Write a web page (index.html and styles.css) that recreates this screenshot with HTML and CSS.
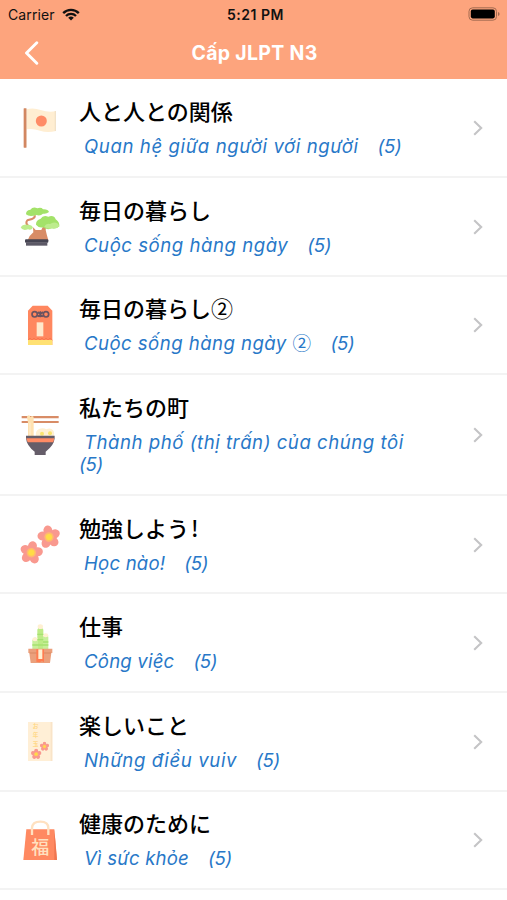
FILE: index.html
```html
<!DOCTYPE html>
<html lang="vi">
<head>
  <meta charset="UTF-8" />
  <meta name="viewport" content="width=device-width, initial-scale=1.0" />
  <title>Cấp JLPT N3</title>
  <link rel="stylesheet" href="styles.css">
</head>
<body>
  <svg width="0" height="0" class="defs">
    <symbol id="chevron" viewBox="0 0 10 16"><path d="M1.2 1.2L8.2 8L1.2 14.8" fill="none" stroke="#c4c4c6" stroke-width="2.1"/></symbol>
    <symbol id="blossom" viewBox="-24 -24 48 48">
      <g fill="#f9998f">
        <ellipse cy="-12" rx="8.5" ry="10"/>
        <ellipse cy="-12" rx="8.5" ry="10" transform="rotate(72)"/>
        <ellipse cy="-12" rx="8.5" ry="10" transform="rotate(144)"/>
        <ellipse cy="-12" rx="8.5" ry="10" transform="rotate(216)"/>
        <ellipse cy="-12" rx="8.5" ry="10" transform="rotate(288)"/>
      </g>
      <circle r="9" fill="#ffb870"/><circle r="6" fill="#ffdc45"/>
    </symbol>
  </svg>

  <header class="header">
    <div class="status">
      <div class="carrier">
        <span>Carrier</span>
        <svg width="18" height="13" viewBox="0 0 18 13" fill="none" stroke="#111" stroke-width="2.3">
          <path d="M1.2 5.1a11 11 0 0 1 15.6 0"/><path d="M4 8a7 7 0 0 1 10 0"/>
          <path d="M9 12.5L6.2 9.8a4 4 0 0 1 5.6 0z" fill="#111" stroke="none"/>
        </svg>
      </div>
      <span class="time">5:21 PM</span>
      <svg class="battery" width="33" height="14" viewBox="0 0 33 14">
        <rect x="1" y=".8" width="27.5" height="12.4" rx="3.6" fill="none" stroke="#a36b50"/>
        <rect x="2.8" y="2.6" width="24" height="8.8" rx="1.8" fill="#000"/>
        <path d="M30 5v4q1.6-.5 1.6-2T30 5z" fill="#a36b50"/>
      </svg>
    </div>
    <div class="navbar">
      <svg class="back" width="15" height="24" viewBox="0 0 15 24"><path d="M12.8 1.8L2.5 12L12.8 22.2" fill="none" stroke="#fff" stroke-width="2.9" stroke-linecap="round" stroke-linejoin="round"/></svg>
      <h1>Cấp JLPT N3</h1>
    </div>
  </header>

  <main class="list">
    <div class="row">
      <svg class="icon" viewBox="30 40 120 120">
        <path d="M50 44Q70 38 92 46T138 50V109Q112 116 90 108T50 104z" fill="#ffeed2"/>
        <path d="M134 49h4v60h-4z" fill="#f2e2c8"/>
        <circle cx="94" cy="79" r="16.500" fill="#ff8c66"/>
        <rect x="41" y="41" width="8.500" height="118" rx="1" fill="#d28761"/>
      </svg>
      <div class="text">
        <h2>人と人との関係</h2>
        <p><span class="name n1">Quan hệ giữa người với người</span>    <span class="count">(5)</span></p>
      </div>
      <svg class="arrow"><use href="#chevron"/></svg>
    </div>

    <div class="row">
      <svg class="icon" viewBox="30 42 120 120">
        <path d="M74 70q2 8-8 11t-14 4q-7 8 3 17" fill="none" stroke="#d88c66" stroke-width="6"/>
        <path d="M69 106q5 5 8 8h17l7-15 7 3q-3 13 2 25l5 18H53q4-14 17-24z" fill="#d88c66"/>
        <path d="M48 67Q47 55 61 53Q69 43 82 49Q94 45 99 52Q114 51 117 60Q109 67 99 65Q91 73 79 69Q58 76 48 67z" fill="#a3e269"/>
        <path d="M78 98Q77 84 92 80Q99 68 115 74Q132 68 137 82Q149 90 148 103Q139 112 126 109Q111 115 99 106Q87 109 78 98z" fill="#a3e269"/>
        <path d="M103 104q5-11 17-8q11-9 24-1l4 8q-9 9-22 6q-12 4-23-5z" fill="#bdec8d"/>
        <path d="M32 106q6-10 19-8q15-1 18 9q-5 9-15 5q-17 6-22-6z" fill="#bdec8d"/>
        <rect x="45" y="142" width="70" height="10" rx="3" fill="#454452"/>
        <path d="M48 151h64v10h-64z" fill="#5c5966"/>
      </svg>
      <div class="text">
        <h2>毎日の暮らし</h2>
        <p><span class="name n2">Cuộc sống hàng ngày</span>    <span class="count">(5)</span></p>
      </div>
      <svg class="arrow"><use href="#chevron"/></svg>
    </div>

    <div class="row">
      <svg class="icon" viewBox="30 45 120 120">
        <path d="M54 62L68 47h45l14 15v103H54z" fill="#ff875f"/>
        <path d="M54 150h73v15H54z" fill="#ffe173"/>
        <path d="M54 150l6-6 6 6 6-6 6 6 6-6 6 6 6-6 6 6 6-6 6 6 6-6 7 6" fill="none" stroke="#f8794d" stroke-width="3"/>
        <rect x="80" y="97" width="20" height="42" fill="#ffe8cc"/>
        <g fill="none" stroke="#6b5360" stroke-width="5"><circle cx="74" cy="73" r="8"/><circle cx="108" cy="73" r="8"/><path d="M83 66l16 14M99 66L83 80M91 64v18"/></g>
      </svg>
      <div class="text">
        <h2>毎日の暮らし<span class="num">②</span></h2>
        <p><span class="name n3">Cuộc sống hàng ngày <span class="num">②</span></span>    <span class="count">(5)</span></p>
      </div>
      <svg class="arrow"><use href="#chevron"/></svg>
    </div>

    <div class="row">
      <svg class="icon" viewBox="30 43 120 120">
        <path d="M35 46h111v7H35zM35 61h111v6H35z" fill="#d88c66"/>
        <path d="M51 50q0-6 5-6t5 6l5-4q6 0 5 6v54H54V66z" fill="#ffe1b0"/>
        <path d="M60 66v40" stroke="#fff0d2" stroke-width="3"/>
        <path d="M78 107q-3-16 9-22q13-5 22 1q13-6 20 3q6 7 2 18z" fill="#fff0d2"/>
        <circle cx="96" cy="99" r="6" fill="#fae36e"/><circle cx="120" cy="98" r="6" fill="#fae36e"/>
        <path d="M48 105h86v8q-2 22-27 40v10H74v-10Q50 136 48 113z" fill="#655d69"/>
        <path d="M49 113h84l-3 12H53z" fill="#ff8b65"/>
      </svg>
      <div class="text">
        <h2>私たちの町</h2>
        <p><span class="name n4">Thành phố (thị trấn) của chúng tôi</span>    <span class="count">(5)</span></p>
      </div>
      <svg class="arrow"><use href="#chevron"/></svg>
    </div>

    <div class="row">
      <svg class="icon" viewBox="30 42 120 120">
        <use href="#blossom" x="-38" y="-38" width="76" height="76" transform="translate(117 81) rotate(-10)"/>
        <use href="#blossom" x="-38" y="-38" width="76" height="76" transform="translate(64 128) rotate(10)"/>
      </svg>
      <div class="text">
        <h2>勉強しよう<span class="bang">!</span></h2>
        <p><span class="name n5">Học nào!</span>    <span class="count">(5)</span></p>
      </div>
      <svg class="arrow"><use href="#chevron"/></svg>
    </div>

    <div class="row">
      <svg class="icon" viewBox="30 38 120 120">
        <path d="M82 58l8-15 10 15v60H82z" fill="#bdeb86"/>
        <path d="M67 90l8-9 9 7v32H67zM99 79l8-9 8 9v41H99z" fill="#c7ef99"/>
        <ellipse cx="91" cy="49" rx="8" ry="7" fill="#fff0d2"/>
        <ellipse cx="107" cy="75" rx="8" ry="6" fill="#fff0d2"/>
        <ellipse cx="75" cy="87" rx="8" ry="6" fill="#fff0d2"/>
        <path d="M82 72h18M82 88h18M67 104h48M99 95h16" stroke="#a5e26f" stroke-width="4"/>
        <path d="M55 115h72v13h-3l-4 30H62l-4-30h-3z" fill="#eba07c"/>
        <path d="M59 128h64" stroke="#d98862" stroke-width="3"/>
        <path d="M79 117h23v39l-6-4-7 4-10-2z" fill="#ff7c50"/>
        <path d="M85 117h12v29H85z" fill="#fff0d2"/>
      </svg>
      <div class="text">
        <h2>仕事</h2>
        <p><span class="name n6">Công việc</span>    <span class="count">(5)</span></p>
      </div>
      <svg class="arrow"><use href="#chevron"/></svg>
    </div>

    <div class="row">
      <svg class="icon" viewBox="30 40 120 120">
        <path d="M54 43h73v118H54z" fill="#ffefd6"/>
        <path d="M122 43h5v118h-5z" fill="#f9e4c8"/>
        <g class="otoshidama"><text x="68" y="62">お</text><text x="68" y="88">年</text><text x="68" y="114">玉</text></g>
        <use href="#blossom" x="88" y="101" width="31" height="31"/>
        <use href="#blossom" x="61" y="122" width="35" height="35"/>
      </svg>
      <div class="text">
        <h2>楽しいこと</h2>
        <p><span class="name n7">Những điều vuiv</span>    <span class="count">(5)</span></p>
      </div>
      <svg class="arrow"><use href="#chevron"/></svg>
    </div>

    <div class="row">
      <svg class="icon" viewBox="30 41 120 120">
        <path d="M49 69h84l8 92H40z" fill="#ff8961"/>
        <path d="M133 69l8 92h-8z" fill="#ef7650"/>
        <path d="M66 86V65q1-19 25-19t24 19v21" fill="none" stroke="#ffe1c0" stroke-width="7"/>
        <text class="fuku" x="64" y="144">福</text>
      </svg>
      <div class="text">
        <h2>健康のために</h2>
        <p><span class="name n8">Vì sức khỏe</span>    <span class="count">(5)</span></p>
      </div>
      <svg class="arrow"><use href="#chevron"/></svg>
    </div>
  </main>
</body>
</html>
```
FILE: styles.css
```css
* {
  box-sizing: border-box;
}
body {
  margin: 0;
  height: 900px;
  overflow: hidden;
  background: #fff;
  font-family: Inter, "Noto Sans CJK JP", sans-serif;
}
.defs {
  display: block;
}
.header {
  height: 79px;
  background: #fda47d;
}
.status {
  height: 28px;
  padding: 0 6px 0 8px;
  display: grid;
  grid-template-columns: 1fr auto 1fr;
  align-items: center;
  font-size: 14px;
  color: #111;
}
.carrier {
  display: flex;
  align-items: center;
  gap: 7px;
  letter-spacing: 0.1px;
}
.time {
  margin-left: 2px;
  font-weight: 600;
  letter-spacing: 0.5px;
}
.battery {
  justify-self: end;
}
.navbar {
  height: 49px;
  padding: 0 24px;
  display: grid;
  grid-template-columns: 15px 1fr 15px;
  align-items: center;
}
.navbar h1 {
  margin: 0 0 0 2px;
  text-align: center;
  color: #fff;
  font-size: 19.5px;
  font-weight: 700;
  letter-spacing: 0.3px;
}
.list {
  padding-top: 0.5px;
}
.row {
  display: flex;
  align-items: center;
  min-height: 98.6px;
  padding: 15.8px 24px 18.8px 20px;
  border-bottom: 2px solid #f3f3f3;
}
.icon {
  width: 40px;
  height: 40px;
  flex: none;
  margin-top: 3px;
}
.text {
  width: 350px;
  margin-left: 19px;
}
.row h2 {
  margin: 0 0 10px;
  font-family: "Noto Sans CJK JP", sans-serif;
  font-size: 22px;
  font-weight: 500;
  line-height: 30px;
  color: #000;
}
.row p {
  margin: 0;
  font-size: 18.6px;
  font-style: italic;
  font-feature-settings: "cv11";
  line-height: 22px;
  color: #2878c8;
  white-space: pre-wrap;
  word-spacing: -0.5px;
}
.name {
  margin-left: 5px;
  word-spacing: 0;
}
.count {
  letter-spacing: -0.3px;
}
.num {
  font-family: "Noto Sans CJK JP", sans-serif;
  font-style: normal;
  font-weight: 400;
  line-height: 1;
}
.bang {
  margin-left: 2px;
}
.n1, .n7 {
  letter-spacing: 0.6px;
}
.n2, .n4 {
  letter-spacing: 0.53px;
}
.n3 {
  letter-spacing: 0.45px;
}
.n5, .n6, .n8 {
  letter-spacing: 0.2px;
}
.arrow {
  width: 10px;
  height: 16px;
  margin-top: 4px;
  margin-left: auto;
}
.otoshidama {
  font: 700 17px "Noto Sans CJK JP", sans-serif;
  fill: #ffd98a;
}
.fuku {
  font: 500 54px "Noto Sans CJK JP", sans-serif;
  fill: #ffe1c0;
}
```
